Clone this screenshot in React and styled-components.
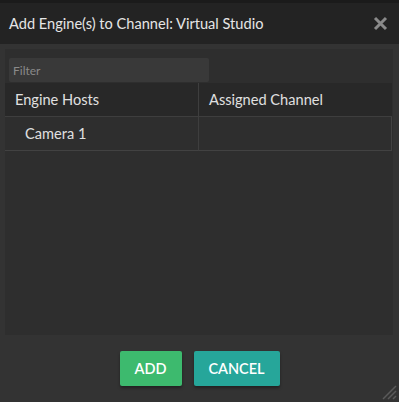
import React from 'react'
import styled, { createGlobalStyle } from 'styled-components'

const GlobalStyle = createGlobalStyle`
  html, body {
    margin: 0;
    padding: 0;
    background: #333333;
    font-family: 'Lato', 'Liberation Sans', sans-serif;
  }
`

const Dialog = styled.div`
  position: relative;
  width: 399px;
  height: 402px;
  background: #333333;
  border-top: 3px solid #1b1b1b;
  box-sizing: border-box;
  display: flex;
  flex-direction: column;
  overflow: hidden;
`

const Header = styled.div`
  height: 41px;
  background: #232323;
  display: flex;
  align-items: center;
  justify-content: space-between;
  padding: 0 10px 0 9px;
`

const Title = styled.h1`
  margin: 0;
  font-size: 14.6px;
  font-weight: 400;
  color: #e6e6e6;
`

const Close = styled.button`
  background: none;
  border: none;
  padding: 0;
  width: 18px;
  height: 18px;
  display: flex;
  align-items: center;
  justify-content: center;
  cursor: pointer;
`

const Panel = styled.div`
  margin: 5px 6px 0 5px;
  height: 286px;
  background: #2e2e2e;
  display: flex;
  flex-direction: column;
  padding-top: 9px;
  box-sizing: border-box;
`

const Filter = styled.input`
  margin-left: 4px;
  width: 200px;
  height: 24px;
  box-sizing: border-box;
  background: #393939;
  border: none;
  border-radius: 2px;
  padding: 0 4px;
  font-family: inherit;
  font-size: 12px;
  color: #ccc;
  outline: none;
  &::placeholder {
    color: #8a8a8a;
  }
`

const Table = styled.div`
  margin-top: 1px;
  width: 387px;
  display: grid;
  grid-template-columns: 193px 1fr;
`

const HeadCell = styled.div`
  height: 33px;
  display: flex;
  align-items: center;
  padding-left: ${p => p.$pad}px;
  background: #282828;
  color: #e0e0e0;
  font-size: 14.6px;
  border-bottom: 1px solid #3e3e3e;
  border-left: ${p => (p.$divider ? '1px solid #3e3e3e' : 'none')};
`

const Cell = styled.div`
  height: 33px;
  display: flex;
  align-items: center;
  padding-left: ${p => p.$pad}px;
  color: #e0e0e0;
  font-size: 14.6px;
  border-bottom: 1px solid #424242;
  border-left: ${p => (p.$divider ? '1px solid #3e3e3e' : 'none')};
  border-right: ${p => (p.$last ? '1px solid #424242' : 'none')};
`

const Footer = styled.div`
  flex: 1;
  display: flex;
  justify-content: center;
  align-items: flex-start;
  gap: 12px;
  padding-top: 16px;
`

const Button = styled.button`
  height: 35px;
  width: ${p => p.$w}px;
  padding: 0;
  border: none;
  border-radius: 2px;
  background: ${p => p.$bg};
  color: #ffffff;
  font-family: inherit;
  font-size: 14.5px;
  font-weight: 600;
  box-shadow: 0 2px 3px rgba(0, 0, 0, 0.35);
  cursor: pointer;
`

const Grip = styled.svg`
  position: absolute;
  right: 2px;
  bottom: 2px;
`

export default function App() {
  return (
    <>
      <GlobalStyle />
      <Dialog>
        <Header>
          <Title>Add Engine(s) to Channel: Virtual Studio</Title>
          <Close aria-label="close">
            <svg width="15" height="15" viewBox="0 0 15 15">
              <path d="M2 2 L13 13 M13 2 L2 13" stroke="#8a8a8a" strokeWidth="3" />
            </svg>
          </Close>
        </Header>
        <Panel>
          <Filter placeholder="Filter" />
          <Table>
            <HeadCell $pad={10}>Engine Hosts</HeadCell>
            <HeadCell $pad={10} $divider>Assigned Channel</HeadCell>
            <Cell $pad={20}>Camera 1</Cell>
            <Cell $pad={10} $divider $last></Cell>
          </Table>
        </Panel>
        <Footer>
          <Button $bg="#3dba6e" $w={62}>ADD</Button>
          <Button $bg="#26a69a" $w={86}>CANCEL</Button>
        </Footer>
        <Grip width="16" height="16" viewBox="0 0 16 16">
          <path d="M2 15 L15 2 M7 15 L15 7 M12 15 L15 12" stroke="#5a5a5a" strokeWidth="1.5" />
        </Grip>
      </Dialog>
    </>
  )
}
